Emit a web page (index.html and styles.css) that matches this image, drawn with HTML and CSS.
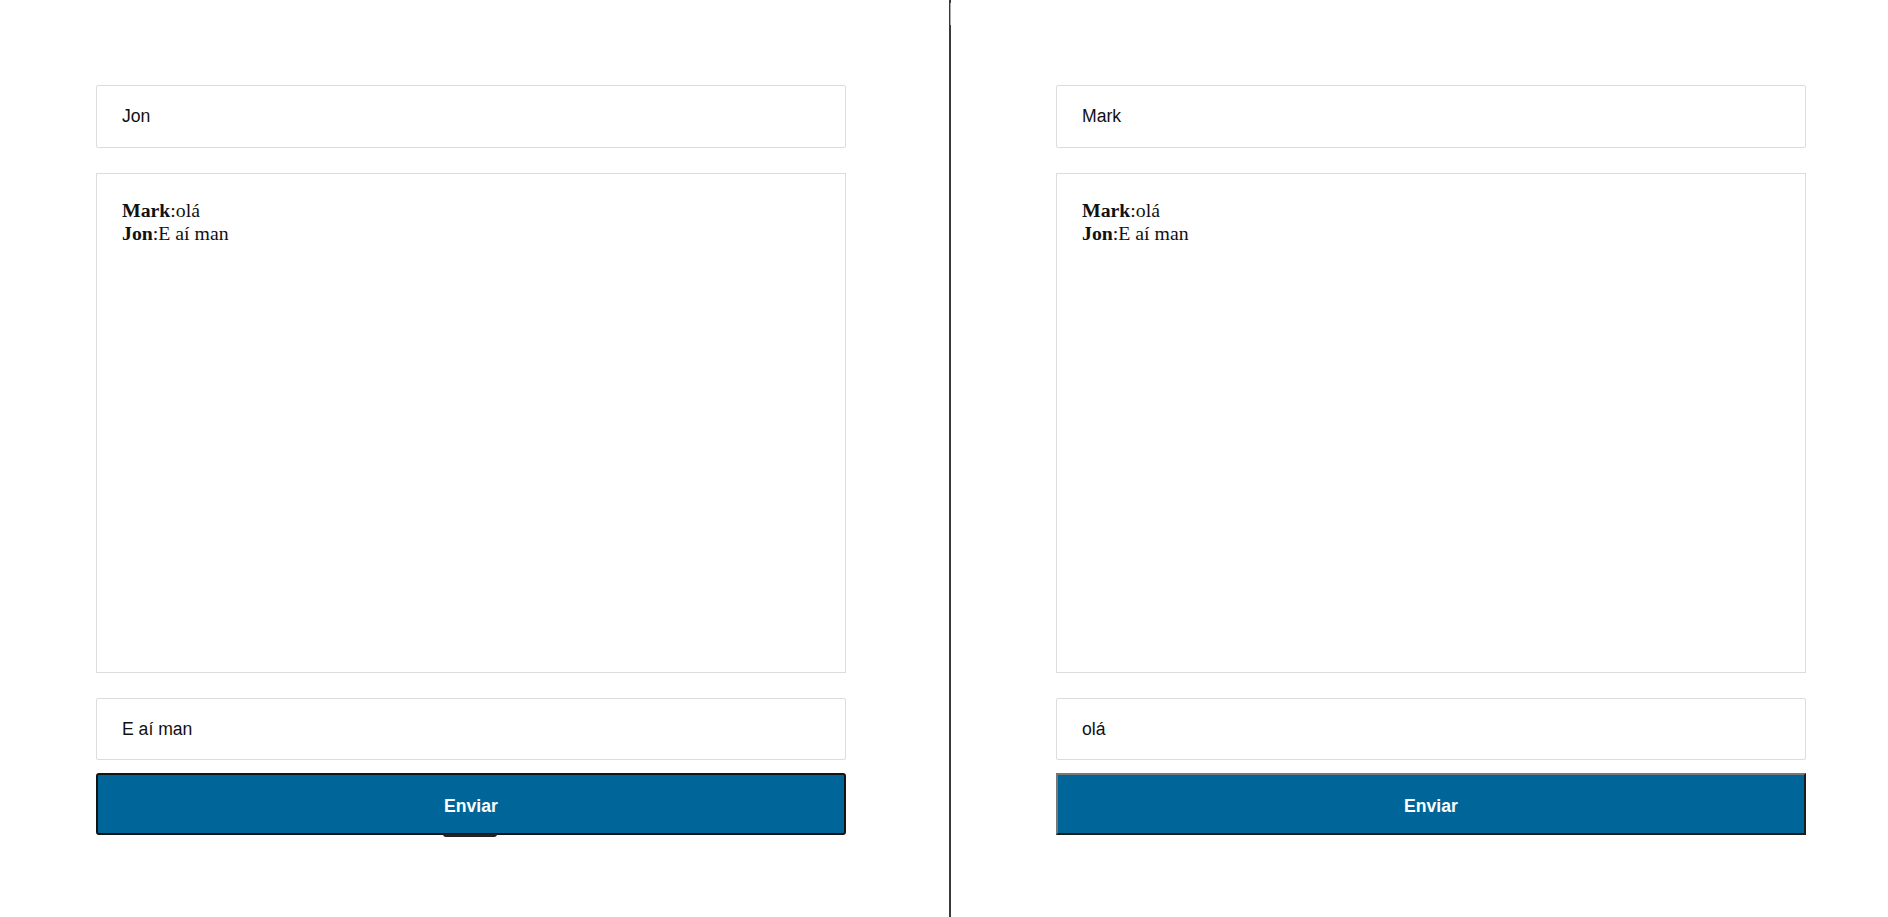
FILE: index.html
```html
<!DOCTYPE html>
<html lang="pt">
<head>
<meta charset="utf-8">
<title>Chat</title>
<link rel="stylesheet" href="styles.css">
</head>
<body>
<div class="page">
  <section class="pane pane-left">
    <div class="chat">
      <div class="field name">Jon</div>
      <div class="messages">
        <div><b>Mark</b>:olá</div>
        <div><b>Jon</b>:E aí man</div>
      </div>
      <div class="field msg">E aí man</div>
      <div class="btn-wrap">
        <div class="btn btn-focus">Enviar</div>
        <span class="btn-tab"></span>
      </div>
    </div>
  </section>
  <div class="divider"><span class="divider-thumb"></span></div>
  <section class="pane pane-right">
    <div class="chat">
      <div class="field name">Mark</div>
      <div class="messages">
        <div><b>Mark</b>:olá</div>
        <div><b>Jon</b>:E aí man</div>
      </div>
      <div class="field msg">olá</div>
      <div class="btn-wrap">
        <div class="btn btn-outset">Enviar</div>
      </div>
    </div>
  </section>
</div>
</body>
</html>
```

FILE: styles.css
```css
html, body {
  margin: 0;
  padding: 0;
  background: #fff;
}
.page {
  display: flex;
  height: 917px;
  overflow: hidden;
}
.pane {
  box-sizing: border-box;
  padding-top: 85px;
}
.pane-left {
  width: 949px;
  padding-left: 96px;
}
.pane-right {
  flex: 1;
  padding-left: 105px;
}
.divider {
  position: relative;
  width: 2px;
  background: #3a3a3a;
}
.divider-thumb {
  position: absolute;
  left: 1px;
  top: 3px;
  width: 1px;
  height: 22px;
  background: #a9a9a9;
}
.chat {
  width: 750px;
  display: flex;
  flex-direction: column;
}
.field {
  box-sizing: border-box;
  border: 1px solid #dcdcdc;
  border-radius: 2px;
  display: flex;
  align-items: center;
  padding-left: 25px;
  font-family: "Liberation Sans", Arial, sans-serif;
  font-size: 17.6px;
  color: #111;
}
.name {
  height: 63px;
}
.messages {
  box-sizing: border-box;
  height: 500px;
  margin-top: 25px;
  border: 1px solid #dcdcdc;
  padding: 25px 25px;
  font-family: "Liberation Serif", "Times New Roman", serif;
  font-size: 19.8px;
  line-height: 23px;
  color: #111;
}
.messages b {
  font-weight: bold;
}
.msg {
  height: 62px;
  margin-top: 25px;
}
.btn-wrap {
  position: relative;
  margin-top: 13px;
}
.btn {
  box-sizing: border-box;
  height: 62px;
  padding-top: 4px;
  background: #006699;
  color: #fff;
  font-family: "Liberation Sans", Arial, sans-serif;
  font-weight: bold;
  font-size: 17.6px;
  display: flex;
  align-items: center;
  justify-content: center;
}
.btn-focus {
  border: 2px solid #141414;
  border-radius: 3px;
}
.btn-outset {
  border-style: solid;
  border-width: 2px;
  border-color: #777 #1c1c1c #1c1c1c #777;
}
.btn-tab {
  position: absolute;
  left: 347px;
  top: 61px;
  width: 54px;
  height: 3px;
  background: #222;
  border-radius: 0 0 3px 3px;
}
```
